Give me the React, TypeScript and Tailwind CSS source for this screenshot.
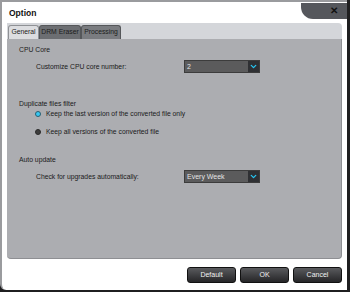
import { ChevronDown } from "lucide-react"

const font = { fontFamily: '"Liberation Sans", Arial, sans-serif' }

function Select({ value }: { value: string }) {
  return (
    <div className="flex h-[13px] w-[76px] items-stretch border border-[#3c3c3c] bg-[#5b5b5c]">
      <span className="flex-1 pl-[2px] text-[7px] leading-[11px] text-[#e4e4e4]">{value}</span>
      <span className="flex w-[11px] items-center justify-center bg-[#2f3033]">
        <ChevronDown size={9} strokeWidth={3.5} className="text-[#27c4f0]" />
      </span>
    </div>
  )
}

function Radio({ checked, label }: { checked?: boolean; label: string }) {
  return (
    <div className="flex items-center gap-[5px] pl-[28px]">
      <span
        className={
          checked
            ? "h-[6px] w-[6px] rounded-full border border-[#2a5d70] bg-[#37c8f2]"
            : "h-[6px] w-[6px] rounded-full border border-[#2a2a2a] bg-[#3d3d3d]"
        }
      />
      <span>{label}</span>
    </div>
  )
}

function Btn({ label }: { label: string }) {
  return (
    <button className="h-[16px] w-[49px] rounded-[3px] border border-[#111] bg-gradient-to-b from-[#5a5b5e] to-[#262628] text-[7px] text-[#f2f2f2]">
      {label}
    </button>
  )
}

export default function App() {
  return (
    <div className="h-[292px] w-[350px] bg-[#1f1f20]" style={font}>
      <div className="relative mr-[3px] flex h-[290px] flex-col rounded-bl-[6px] border-l-2 border-t-2 border-[#9a9b9e] bg-white">
        <div className="absolute right-0 top-[1px] flex h-[16px] w-[46px] items-center justify-end rounded-bl-[12px] bg-[#55575c] pr-[9px]">
          <span className="text-[10px] font-bold leading-none text-[#111]">✕</span>
        </div>

        <div className="h-[20px] pl-[7px] pt-[6px] text-[8.5px] font-bold leading-[10px] text-[#111]">Option</div>

        <div className="mx-[5px] mt-[1px] flex h-[16px] items-end whitespace-nowrap rounded-tr-[4px] bg-[#d4d6da] pl-[1px] text-[6.8px] text-[#1c1c1c]">
          <div className="flex h-[14px] w-[31px] items-center justify-center rounded-t-[3px] border border-b-0 border-[#8f9195] bg-[#dcdde0]">
            General
          </div>
          <div className="flex h-[14px] w-[42px] items-center justify-center rounded-t-[3px] border border-b-0 border-[#55575a] bg-[#6c6e72]">
            DRM Eraser
          </div>
          <div className="flex h-[14px] w-[40px] items-center justify-center rounded-t-[3px] border border-b-0 border-[#55575a] bg-[#7a7c80]">
            Processing
          </div>
        </div>

        <div className="mx-[5px] flex h-[220px] flex-col whitespace-nowrap rounded-b-[4px] border-b border-r border-[#8e8f93] bg-[#acadb1] text-[6.8px] leading-[9px] text-[#1a1a1a]">
          <div className="pl-[12px] pt-[6px]">CPU Core</div>
          <div className="mt-[6px] flex items-center">
            <span className="w-[177px] pl-[29px]">Customize CPU core number:</span>
            <Select value="2" />
          </div>
          <div className="mt-[26px] pl-[12px]">Duplicate files filter</div>
          <div className="mt-[1px]">
            <Radio checked label="Keep the last version of the converted file only" />
          </div>
          <div className="mt-[9px]">
            <Radio label="Keep all versions of the converted file" />
          </div>
          <div className="mt-[19px] pl-[12px]">Auto update</div>
          <div className="mt-[6px] flex items-center">
            <span className="w-[177px] pl-[29px]">Check for upgrades automatically:</span>
            <Select value="Every Week" />
          </div>
        </div>

        <div className="mt-[8px] flex justify-end gap-[4px] pr-[5px]">
          <Btn label="Default" />
          <Btn label="OK" />
          <Btn label="Cancel" />
        </div>
      </div>
    </div>
  )
}
